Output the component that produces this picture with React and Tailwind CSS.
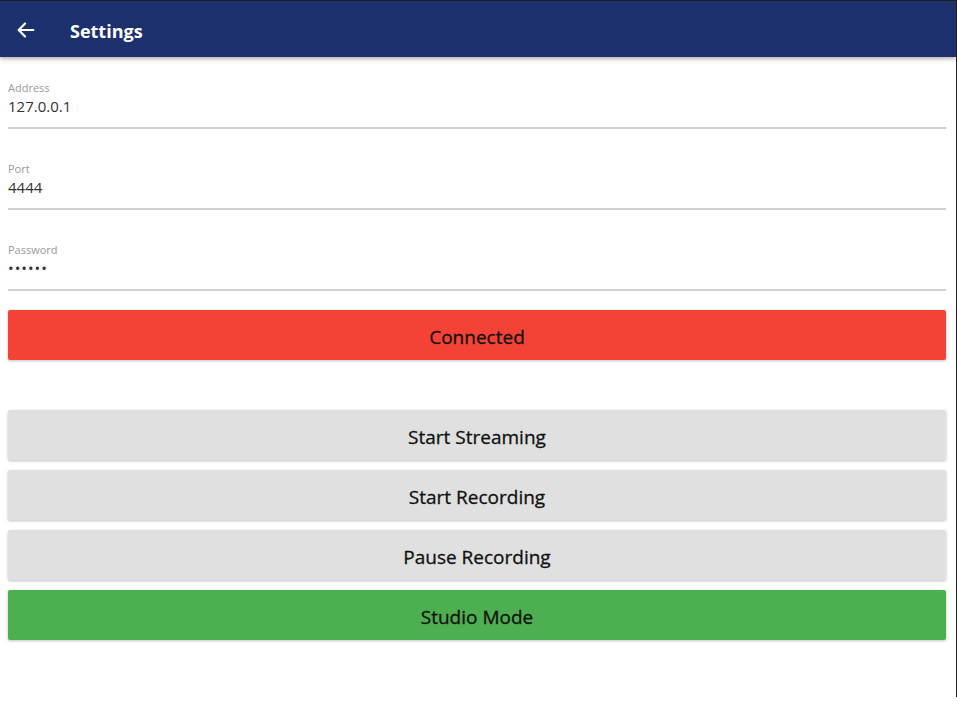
import React from "react";

const font = { fontFamily: '"Open Sans", "Noto Sans", sans-serif' };

function Field({ label, value, password }) {
  return (
    <div className="h-[81px] flex flex-col pt-[18px]">
      <div className="text-[11px] leading-[14px] text-[#9a9a9a]">{label}</div>
      <div className={`text-[15px] leading-[22px] text-[#333] ${password ? "tracking-[1px]" : ""}`}>
        {value}
      </div>
      <div className="mt-[10px] h-[2px] bg-[#cfcfcf]" />
    </div>
  );
}

function Btn({ children, color }) {
  return (
    <button
      className={`h-[50px] w-full flex items-center justify-center pt-[4px] text-[19px] text-[#111] [-webkit-text-stroke:0.3px_#111] rounded-[2px] shadow-[0_1px_3px_rgba(0,0,0,0.25)] ${color}`}
    >
      {children}
    </button>
  );
}

export default function App() {
  return (
    <div className="w-[957px] h-[701px] bg-white overflow-hidden" style={font}>
      <div className="h-[697px] border-t border-r border-[#1f1f1f] flex flex-col">
        <div className="h-[56px] bg-[#1c306d] flex items-center shadow-[0_2px_4px_rgba(0,0,0,0.3)] relative z-10">
          <svg width="22" height="22" viewBox="0 0 24 24" className="ml-[15px] mt-[1px]" fill="none" stroke="white" strokeWidth="2.4" strokeLinecap="round" strokeLinejoin="round">
            <path d="M20 12H4.5M11 5l-7 7 7 7" />
          </svg>
          <div className="ml-[33px] mt-[4px] text-white text-[18px] font-bold">Settings</div>
        </div>
        <div className="pt-[6px] pl-[8px] pr-[10px] flex flex-col">
          <Field label="Address" value="127.0.0.1" />
          <Field label="Port" value="4444" />
          <Field label="Password" value="••••••" password />
          <div className="mt-[4px]">
            <Btn color="bg-[#f44336]">Connected</Btn>
          </div>
          <div className="mt-[50px] flex flex-col gap-[10px]">
            <Btn color="bg-[#e0e0e0]">Start Streaming</Btn>
            <Btn color="bg-[#e0e0e0]">Start Recording</Btn>
            <Btn color="bg-[#e0e0e0]">Pause Recording</Btn>
            <Btn color="bg-[#4caf50]">Studio Mode</Btn>
          </div>
        </div>
      </div>
    </div>
  );
}
